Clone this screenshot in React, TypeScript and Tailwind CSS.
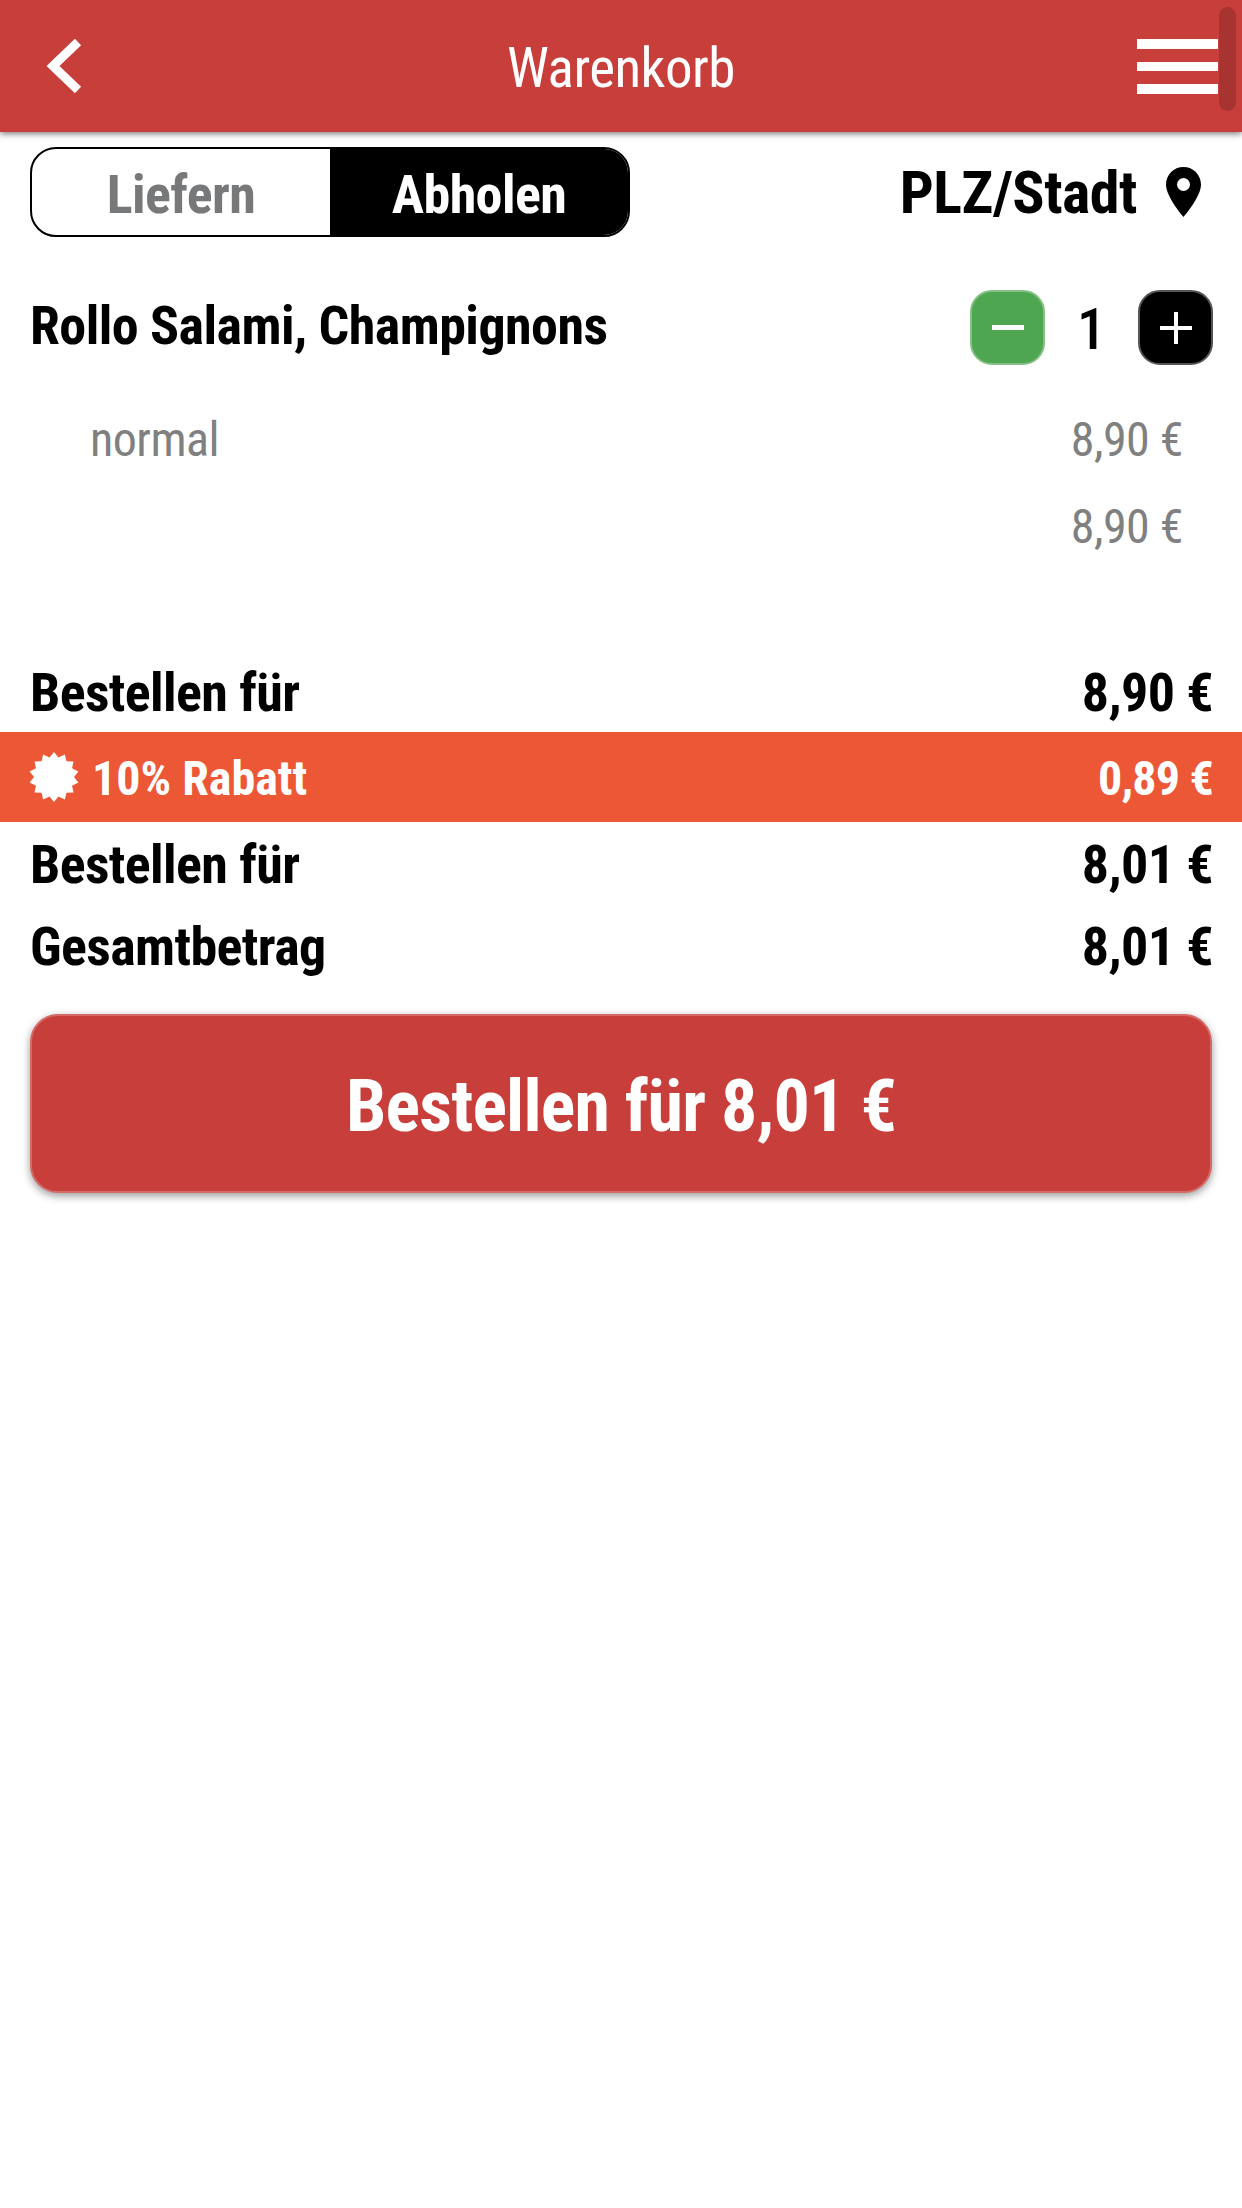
import React from 'react';

const font = "font-['Roboto_Condensed','Liberation_Sans_Narrow',Roboto,sans-serif] [font-stretch:75%]";

const Burst = () => {
  const pts: string[] = [];
  for (let i = 0; i < 28; i++) {
    const r = i % 2 === 0 ? 25 : 20;
    const a = (i / 28) * Math.PI * 2;
    pts.push(`${25 + r * Math.sin(a)},${25 - r * Math.cos(a)}`);
  }
  return (
    <svg viewBox="0 0 50 50" className="-ml-[1px] w-[50px] h-[50px] fill-white">
      <polygon points={pts.join(' ')} />
    </svg>
  );
};

const Total = ({ label, value, className }: { label: string; value: string; className: string }) => (
  <div className={`flex items-center justify-between pl-[30px] pr-[29px] text-[54px] tracking-[-0.6px] font-bold text-black ${className}`}>
    <span>{label}</span>
    <span>{value}</span>
  </div>
);

export default function App() {
  return (
    <div className={`relative w-[1242px] h-[2208px] bg-white overflow-hidden ${font}`}>
      {/* header */}
      <header className="relative h-[132px] bg-[#c73e3a] shadow-[0_2px_6px_rgba(0,0,0,0.5)] grid grid-cols-[1fr_auto_1fr] items-center px-[24px] text-white">
        <svg viewBox="0 0 36 54" className="ml-[22px] w-[36px] h-[54px] fill-none stroke-white stroke-[9]">
          <path d="M32 3 L7 27 L32 51" />
        </svg>
        <h1 className="text-[55px] tracking-[-0.5px] font-normal leading-none pt-[4px]">Warenkorb</h1>
        <div className="justify-self-end w-[81px] flex flex-col gap-[13px]">
          <div className="h-[10px] bg-white" />
          <div className="h-[9px] bg-white" />
          <div className="h-[10px] bg-white" />
        </div>
      </header>
      <div className="absolute left-[1219px] top-[7px] w-[17px] h-[104px] rounded-full bg-[#a83431]" />

      {/* toggle + location */}
      <div className="flex items-center justify-between pl-[30px] pr-[41px] pt-[15px]">
        <div className="flex w-[600px] h-[90px] border-2 border-black rounded-[26px] overflow-hidden text-[54px] tracking-[-0.6px] font-bold">
          <div className="w-[298px] pt-[4px] flex items-center justify-center text-[#77787a]">Liefern</div>
          <div className="flex-1 pt-[4px] flex items-center justify-center bg-black text-white">Abholen</div>
        </div>
        <div className="flex items-center gap-[29px] text-[60px] leading-none tracking-[-0.5px] font-bold text-black">
          <span className="pt-[2px]">PLZ/Stadt</span>
          <svg viewBox="0 0 35 50" className="w-[35px] h-[50px] fill-black">
            <path fillRule="evenodd" d="M17.5 0C7.8 0 0 7.8 0 17.5 0 30 17.5 50 17.5 50S35 30 35 17.5C35 7.8 27.2 0 17.5 0Zm0 24a6.5 6.5 0 1 1 0-13 6.5 6.5 0 0 1 0 13Z" />
          </svg>
        </div>
      </div>

      {/* item */}
      <div className="flex items-center justify-between h-[81px] pl-[30px] pr-[29px] mt-[50px]">
        <span className="text-[54px] tracking-[-0.55px] font-bold text-black pb-[5px]">Rollo Salami, Champignons</span>
        <div className="flex items-center">
          <button className="w-[75px] h-[75px] rounded-[22px] bg-[#4fa650] border-2 border-[#83c184] flex items-center justify-center">
            <span className="w-[32px] h-[5px] bg-white" />
          </button>
          <span className="w-[93px] pt-[2px] text-center text-[58px] leading-none font-medium text-black">1</span>
          <button className="relative w-[75px] h-[75px] rounded-[22px] bg-black border-2 border-[#555] flex items-center justify-center">
            <span className="w-[32px] h-[4px] bg-white" />
            <span className="absolute w-[4px] h-[32px] bg-white" />
          </button>
        </div>
      </div>

      <div className="flex justify-between pl-[90px] pr-[59px] mt-[28px] text-[48px] tracking-[-0.5px] leading-[87px] text-[#808080]">
        <span>normal</span>
        <span>8,90 €</span>
      </div>
      <div className="flex justify-end pr-[59px] text-[48px] tracking-[-0.5px] leading-[87px] text-[#808080]">
        <span>8,90 €</span>
      </div>

      {/* totals */}
      <Total label="Bestellen für" value="8,90 €" className="mt-[82px] h-[80px]" />
      <div className="flex items-center justify-between h-[90px] bg-[#ec5835] pl-[30px] pr-[29px] text-[48px] font-bold text-white">
        <span className="flex items-center gap-[13px]"><Burst /><span className="pt-[3px]">10% Rabatt</span></span>
        <span className="pt-[3px] tracking-[-0.8px]">0,89 €</span>
      </div>
      <Total label="Bestellen für" value="8,01 €" className="h-[83px] pt-[2px]" />
      <Total label="Gesamtbetrag" value="8,01 €" className="h-[83px]" />

      <button className="block mx-[30px] mt-[26px] w-[1182px] h-[179px] pt-[6px] rounded-[28px] bg-[#c73e3a] border-2 border-[#d46a67] shadow-[0_3px_8px_rgba(0,0,0,0.4)] text-white text-[72px] tracking-[-0.8px] font-bold">
        Bestellen für 8,01 €
      </button>
    </div>
  );
}
